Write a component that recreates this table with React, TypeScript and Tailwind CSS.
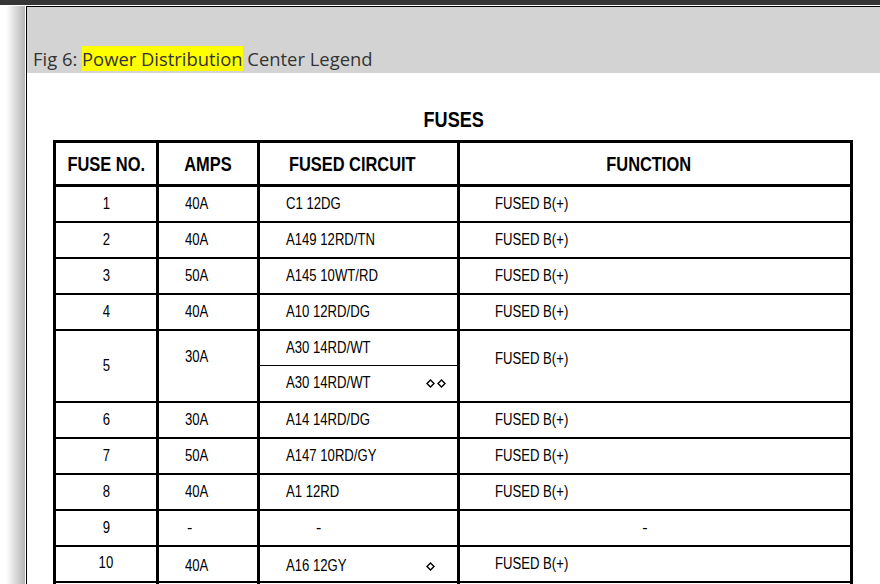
import React from "react";

const narrow = { fontFamily: "'Liberation Sans','Arial',sans-serif" };

function N({ children, c }: { children: React.ReactNode; c?: boolean }) {
  return (
    <span className={`inline-block whitespace-nowrap scale-x-[0.82] ${c ? "origin-center" : "origin-left"}`}>
      {children}
    </span>
  );
}

function Diamonds({ n }: { n: number }) {
  return (
    <span className="ml-auto mr-[9px] flex w-[22px] gap-[2px]">
      {Array.from({ length: n }).map((_, i) => (
        <svg key={i} width="9" height="9" viewBox="0 0 9 9">
          <path d="M4.5 1 L8 4.5 L4.5 8 L1 4.5 Z" fill="none" stroke="#000" strokeWidth="1.4" />
        </svg>
      ))}
    </span>
  );
}

type Row = { no: string; amps: string; circuit: string; fn: string };

const rows: Row[] = [
  { no: "1", amps: "40A", circuit: "C1 12DG", fn: "FUSED B(+)" },
  { no: "2", amps: "40A", circuit: "A149 12RD/TN", fn: "FUSED B(+)" },
  { no: "3", amps: "50A", circuit: "A145 10WT/RD", fn: "FUSED B(+)" },
  { no: "4", amps: "40A", circuit: "A10 12RD/DG", fn: "FUSED B(+)" },
];
const rows2: Row[] = [
  { no: "6", amps: "30A", circuit: "A14 14RD/DG", fn: "FUSED B(+)" },
  { no: "7", amps: "50A", circuit: "A147 10RD/GY", fn: "FUSED B(+)" },
  { no: "8", amps: "40A", circuit: "A1 12RD", fn: "FUSED B(+)" },
];

const td = "border-x-[3px] border-y-2 border-black p-0 align-middle";

function BodyRow({ r }: { r: Row }) {
  return (
    <tr className="h-[36px]">
      <td className={`${td} text-center`}><N c>{r.no}</N></td>
      <td className={`${td} pl-[26px]`}><N>{r.amps}</N></td>
      <td className={`${td} pl-[26px]`}><N>{r.circuit}</N></td>
      <td className={`${td} pl-[35px]`}><N>{r.fn}</N></td>
    </tr>
  );
}

export default function App() {
  return (
    <div className="flex h-[584px] w-[880px] flex-col overflow-hidden bg-white">
      <div className="h-[5px] shrink-0 bg-[#353535]" />
      <div className="h-px shrink-0 bg-white" />
      <div className="flex min-h-0 flex-1">
        <div className="w-[25px] shrink-0 bg-[linear-gradient(to_right,#ffffff_25%,#b4b4b4)]" />
        <div className="w-px shrink-0 bg-white" />
        <div className="flex min-w-0 flex-1 flex-col border-l border-t border-black">
          <div
            className="flex h-[66px] shrink-0 items-end bg-[#d3d3d3] pl-[6px] text-[18.4px] leading-[29px] text-[#333]"
            style={{ fontFamily: "'Open Sans','Noto Sans',sans-serif" }}
          >
            <span>
              Fig 6: <span className="bg-[#ffff00]">Power Distribution</span> Center Legend
            </span>
          </div>
          <div className="flex flex-col text-black" style={narrow}>
            <div className="mt-[35px] text-center text-[22px] font-bold leading-[24px]"><N c>FUSES</N></div>
            <table className="ml-[26px] mt-[8px] w-[797px] table-fixed border-collapse border-x-2 border-t-[3px] border-black text-[16px]">
              <colgroup>
                <col className="w-[103px]" />
                <col className="w-[101px]" />
                <col className="w-[200px]" />
                <col className="w-[393px]" />
              </colgroup>
              <thead>
                <tr className="h-[44px] text-[20px] font-bold">
                  <th className="border-x-[3px] border-b-[3px] border-black text-center"><N c>FUSE NO.</N></th>
                  <th className="border-x-[3px] border-b-[3px] border-black text-center"><N c>AMPS</N></th>
                  <th className="border-x-[3px] border-b-[3px] border-black pr-[12px] text-center"><N c>FUSED CIRCUIT</N></th>
                  <th className="border-x-[3px] border-b-[3px] border-black pr-[12px] text-center"><N c>FUNCTION</N></th>
                </tr>
              </thead>
              <tbody>
                {rows.map((r) => (
                  <BodyRow key={r.no} r={r} />
                ))}
                <tr className="h-[36px]">
                  <td rowSpan={2} className={`${td} text-center`}><N c>5</N></td>
                  <td rowSpan={2} className={`${td} pb-[18px] pl-[26px]`}><N>30A</N></td>
                  <td className="border-x-[3px] border-b-[1.5px] border-t-2 border-black pl-[26px] align-middle"><N>A30 14RD/WT</N></td>
                  <td rowSpan={2} className={`${td} pb-[14px] pl-[35px]`}><N>FUSED B(+)</N></td>
                </tr>
                <tr className="h-[36px]">
                  <td className="border-x-[3px] border-b-2 border-t-[1.5px] border-black p-0 pl-[26px] align-middle">
                    <div className="flex items-center">
                      <N>A30 14RD/WT</N>
                      <Diamonds n={2} />
                    </div>
                  </td>
                </tr>
                {rows2.map((r) => (
                  <BodyRow key={r.no} r={r} />
                ))}
                <tr className="h-[36px]">
                  <td className={`${td} text-center`}><N c>9</N></td>
                  <td className={`${td} pl-[28px]`}>-</td>
                  <td className={`${td} pl-[56px]`}>-</td>
                  <td className={`${td} pr-[20px] text-center`}>-</td>
                </tr>
                <tr className="h-[36px]">
                  <td className={`${td} pb-[2px] text-center`}><N c>10</N></td>
                  <td className={`${td} pl-[26px] pt-[5px]`}><N>40A</N></td>
                  <td className={`${td} pl-[26px] pt-[5px]`}>
                    <div className="flex items-center">
                      <N>A16 12GY</N>
                      <Diamonds n={1} />
                    </div>
                  </td>
                  <td className={`${td} pl-[35px]`}><N>FUSED B(+)</N></td>
                </tr>
                <tr className="h-[36px]">
                  <td className={td}></td>
                  <td className={td}></td>
                  <td className={td}></td>
                  <td className={td}></td>
                </tr>
              </tbody>
            </table>
          </div>
        </div>
      </div>
    </div>
  );
}
